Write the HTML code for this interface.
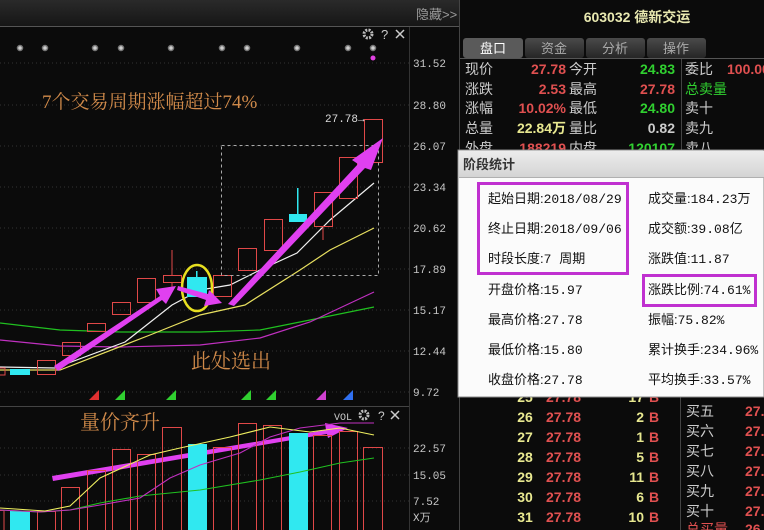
<!DOCTYPE html>
<html><head><meta charset="utf-8"><style>
html,body{margin:0;padding:0;background:#0a0a0a;width:764px;height:530px;overflow:hidden}
svg{display:block}
text{font-family:"Liberation Sans","Noto Sans CJK SC",sans-serif}
.m{font-family:"Liberation Mono","Noto Sans CJK SC",monospace}
.s{font-family:"Liberation Serif","Noto Serif CJK SC",serif}
</style></head><body>
<svg width="764" height="530" viewBox="0 0 764 530" xmlns="http://www.w3.org/2000/svg">
<defs>
<linearGradient id="tb" x1="0" y1="0" x2="0" y2="1"><stop offset="0" stop-color="#2a2a2a"/><stop offset="1" stop-color="#161616"/></linearGradient>
<linearGradient id="ph" x1="0" y1="0" x2="0" y2="1"><stop offset="0" stop-color="#ececec"/><stop offset="1" stop-color="#d4d4d4"/></linearGradient>
<linearGradient id="tab" x1="0" y1="0" x2="0" y2="1"><stop offset="0" stop-color="#4a4a4a"/><stop offset="1" stop-color="#262626"/></linearGradient>
</defs>
<rect width="764" height="530" fill="#0b0b0b"/>
<rect x="0" y="0" width="459" height="26" fill="url(#tb)"/>
<line x1="0" y1="26.5" x2="459" y2="26.5" stroke="#555"/>
<text x="416" y="19" font-size="13" fill="#9a9a9a">隐藏&gt;&gt;</text>
<line x1="409.5" y1="27" x2="409.5" y2="530" stroke="#333"/>
<line x1="459.5" y1="0" x2="459.5" y2="530" stroke="#444"/>
<g stroke="#333" stroke-dasharray="1,3">
<line x1="0" y1="63" x2="409" y2="63"/><line x1="0" y1="105" x2="409" y2="105"/><line x1="0" y1="146" x2="409" y2="146"/><line x1="0" y1="187" x2="409" y2="187"/><line x1="0" y1="228" x2="409" y2="228"/><line x1="0" y1="269" x2="409" y2="269"/><line x1="0" y1="310" x2="409" y2="310"/><line x1="0" y1="351" x2="409" y2="351"/><line x1="0" y1="392" x2="409" y2="392"/>
<line x1="0" y1="448" x2="409" y2="448"/><line x1="0" y1="475" x2="409" y2="475"/><line x1="0" y1="501" x2="409" y2="501"/>
</g>
<g font-size="11" fill="#c8c8c8">
<text x="413" y="67" class="m">31.52</text><text x="413" y="109" class="m">28.80</text><text x="413" y="150" class="m">26.07</text><text x="413" y="191" class="m">23.34</text><text x="413" y="232" class="m">20.62</text><text x="413" y="273" class="m">17.89</text><text x="413" y="314" class="m">15.17</text><text x="413" y="355" class="m">12.44</text><text x="413" y="396" class="m">9.72</text>
<text x="413" y="452" class="m">22.57</text><text x="413" y="479" class="m">15.05</text><text x="413" y="505" class="m">7.52</text><text x="413" y="521" class="m">X万</text>
</g>
<g fill="#cfcfcf" stroke="#777" stroke-width="1.5"><circle cx="20" cy="48" r="2.5"/><circle cx="45" cy="48" r="2.5"/><circle cx="95" cy="48" r="2.5"/><circle cx="121" cy="48" r="2.5"/><circle cx="171" cy="48" r="2.5"/><circle cx="222" cy="48" r="2.5"/><circle cx="247" cy="48" r="2.5"/><circle cx="297" cy="48" r="2.5"/><circle cx="348" cy="48" r="2.5"/><circle cx="373" cy="48" r="2.5"/></g>
<circle cx="373" cy="58" r="2.5" fill="#e040e0"/>
<circle cx="368" cy="34" r="4" fill="none" stroke="#bbb" stroke-width="3" stroke-dasharray="2,1.2"/>
<text x="381" y="39" font-size="13" fill="#ccc">?</text>
<path d="M396 30l8 8M404 30l-8 8" stroke="#ccc" stroke-width="1.5"/>
<g fill="none" stroke-width="1.2">
<polyline stroke="#20c020" points="0,323 60,330 120,332 200,332 260,330 310,320 374,307"/>
<polyline stroke="#c030c0" points="0,340 60,346 120,347 200,345 260,338 310,322 374,292"/>
<polyline stroke="#e8e060" points="0,370 60,370 150,335 200,315 245,305 300,270 330,250 374,228"/>
<polyline stroke="#f0f0f0" points="0,367 55,368 125,342 172,305 200,290 230,285 260,270 297,253 330,220 374,183"/>
</g>
<g fill="none" stroke="#e04848" stroke-width="1">
<rect x="-2" y="368" width="7" height="7"/>
<rect x="37.5" y="360.5" width="18" height="14"/>
<rect x="62.5" y="342.5" width="18" height="13"/>
<rect x="87.5" y="323.5" width="18" height="8"/>
<rect x="112.5" y="302.5" width="18" height="12"/>
<rect x="137.5" y="278.5" width="18" height="24"/>
<rect x="163.5" y="275.5" width="18" height="7"/><line x1="172" y1="250" x2="172" y2="275"/><line x1="172" y1="283" x2="172" y2="290"/>
<rect x="213.5" y="275.5" width="18" height="21"/>
<rect x="238.5" y="248.5" width="18" height="22"/>
<rect x="264.5" y="219.5" width="18" height="31"/>
<rect x="314.5" y="192.5" width="18" height="34"/><line x1="323" y1="226" x2="323" y2="240"/>
<rect x="339.5" y="157.5" width="18" height="41"/>
<rect x="364.5" y="119.5" width="18" height="43"/>
</g>
<g fill="#30e8f0"><rect x="10" y="369" width="20" height="6"/><rect x="187" y="277" width="20" height="20"/><rect x="196" y="271" width="1.5" height="8"/><rect x="289" y="214" width="18" height="8"/><rect x="297" y="188" width="1.5" height="28"/></g>
<rect x="221.5" y="145.5" width="157" height="130" fill="none" stroke="#aaa" stroke-dasharray="3,3"/>
<text x="325" y="122" class="m" font-size="11" fill="#ddd">27.78→</text>
<ellipse cx="197" cy="288" rx="15" ry="23" fill="none" stroke="#e8e020" stroke-width="2.5"/>
<g fill="#e040f0">
<polygon points="54,366 160,296 156,289 176,286 166,304 162,300 58,371"/>
<polygon points="178,286 208,294 209,290 222,303 204,306 206,300 177,290"/>
<polygon points="228,304 358,164 352,160 383,138 371,170 365,168 234,306"/>
<polygon points="52,476 326,430 325,423 348,428 328,438 327,434 53,481"/>
</g>
<text x="42" y="108" font-size="19" fill="#d08a4a" class="s">7个交易周期涨幅超过74%</text>
<text x="191" y="368" font-size="20" fill="#d08a4a" class="s">此处选出</text>
<g font-size="10"><text x="89" y="399" fill="#e03030">◢</text><text x="115" y="399" fill="#30d030">◢</text><text x="166" y="399" fill="#30d030">◢</text><text x="241" y="399" fill="#30d030">◢</text><text x="266" y="399" fill="#30d030">◢</text><text x="316" y="399" fill="#d040d0">◢</text><text x="343" y="399" fill="#3070f0">◢</text></g>
<line x1="0" y1="406.5" x2="409" y2="406.5" stroke="#444"/>
<g fill="none" stroke="#e04848">
<rect x="-2" y="510.5" width="6" height="25"/>
<rect x="37.5" y="511.5" width="18" height="25"/>
<rect x="61.5" y="487.5" width="18" height="50"/>
<rect x="87.5" y="470.5" width="18" height="70"/>
<rect x="112.5" y="449.5" width="18" height="90"/>
<rect x="137.5" y="454.5" width="18" height="90"/>
<rect x="162.5" y="427.5" width="19" height="110"/>
<rect x="213.5" y="447.5" width="18" height="90"/>
<rect x="238.5" y="423.5" width="18" height="110"/>
<rect x="263.5" y="425.5" width="18" height="110"/>
<rect x="313.5" y="435.5" width="18" height="100"/>
<rect x="339.5" y="431.5" width="18" height="100"/>
<rect x="363.5" y="447.5" width="19" height="90"/>
</g>
<g fill="#30e8f0"><rect x="10" y="511" width="20" height="19"/><rect x="188" y="444" width="19" height="86"/><rect x="289" y="433" width="19" height="97"/></g>
<g fill="none" stroke-width="1.1">
<polyline stroke="#20c020" points="0,510 40,512 70,510 100,503 140,496 200,490 260,480 300,472 340,463 374,458"/>
<polyline stroke="#c030c0" points="0,510 40,512 70,510 100,505 140,498 170,478 200,465 240,453 270,437 300,428 340,423 374,423"/>
<polyline stroke="#f0f060" points="0,508 45,511 70,506 100,478 150,455 180,448 230,437 270,427 310,432 340,428 374,435"/>
</g>
<text x="80" y="429" font-size="20" fill="#d08a4a" class="s">量价齐升</text>
<text x="334" y="420" class="m" font-size="10" fill="#ccc">VOL</text>
<circle cx="364" cy="415" r="4" fill="none" stroke="#bbb" stroke-width="3" stroke-dasharray="2,1.2"/>
<text x="378" y="420" font-size="12" fill="#ccc">?</text>
<path d="M391 411l8 8M399 411l-8 8" stroke="#ccc" stroke-width="1.5"/>

<rect x="460" y="0" width="304" height="530" fill="#0b0b0b"/>
<text x="637" y="22" text-anchor="middle" font-size="14" font-weight="bold" fill="#e8e8b0">603032 德新交运</text>
<rect x="463" y="38" width="60" height="20" rx="3" fill="#5a5a5a"/>
<rect x="525" y="38" width="59" height="20" rx="3" fill="url(#tab)"/>
<rect x="586" y="38" width="59" height="20" rx="3" fill="url(#tab)"/>
<rect x="647" y="38" width="59" height="20" rx="3" fill="url(#tab)"/>
<line x1="460" y1="58.5" x2="764" y2="58.5" stroke="#555"/>
<g font-size="13" text-anchor="middle"><text x="493" y="53" fill="#fff">盘口</text><text x="554" y="53" fill="#aaa">资金</text><text x="615" y="53" fill="#aaa">分析</text><text x="676" y="53" fill="#aaa">操作</text></g>
<line x1="681.5" y1="59" x2="681.5" y2="150" stroke="#444"/>
<g font-size="14">
<g fill="#ccc"><text x="465" y="74">现价</text><text x="465" y="94">涨跌</text><text x="465" y="113">涨幅</text><text x="465" y="133">总量</text><text x="465" y="153">外盘</text>
<text x="569" y="74">今开</text><text x="569" y="94">最高</text><text x="569" y="113">最低</text><text x="569" y="133">量比</text><text x="569" y="153">内盘</text>
<text x="685" y="74">委比</text><text x="685" y="113">卖十</text><text x="685" y="133">卖九</text><text x="685" y="153">卖八</text></g>
<text x="685" y="94" fill="#30d030">总卖量</text>
<g text-anchor="end" font-weight="bold">
<text x="566" y="74" fill="#e05050">27.78</text><text x="566" y="94" fill="#e05050">2.53</text><text x="566" y="113" fill="#e05050">10.02%</text><text x="566" y="133" fill="#e8e890">22.84万</text><text x="566" y="153" fill="#e05050">188219</text>
<text x="675" y="74" fill="#30d030">24.83</text><text x="675" y="94" fill="#e05050">27.78</text><text x="675" y="113" fill="#30d030">24.80</text><text x="675" y="133" fill="#ccc">0.82</text><text x="675" y="153" fill="#30d030">120107</text>
</g>
<text x="727" y="74" font-weight="bold" fill="#e05050">100.00</text>
</g>
<line x1="680.5" y1="397" x2="680.5" y2="530" stroke="#444"/>
<g font-size="14" font-weight="bold">
<g fill="#e8e890" text-anchor="middle"><text x="525" y="402">25</text><text x="525" y="422">26</text><text x="525" y="442">27</text><text x="525" y="462">28</text><text x="525" y="482">29</text><text x="525" y="502">30</text><text x="525" y="522">31</text></g>
<g fill="#e05050"><text x="546" y="402">27.78</text><text x="546" y="422">27.78</text><text x="546" y="442">27.78</text><text x="546" y="462">27.78</text><text x="546" y="482">27.78</text><text x="546" y="502">27.78</text><text x="546" y="522">27.78</text></g>
<g fill="#e8e890" text-anchor="end"><text x="644" y="402">17</text><text x="644" y="422">2</text><text x="644" y="442">1</text><text x="644" y="462">5</text><text x="644" y="482">11</text><text x="644" y="502">6</text><text x="644" y="522">10</text></g>
<g fill="#e05050"><text x="649" y="402">B</text><text x="649" y="422">B</text><text x="649" y="442">B</text><text x="649" y="462">B</text><text x="649" y="482">B</text><text x="649" y="502">B</text><text x="649" y="522">B</text></g>
</g>
<g font-size="14" fill="#ccc"><text x="686" y="416">买五</text><text x="686" y="436">买六</text><text x="686" y="456">买七</text><text x="686" y="476">买八</text><text x="686" y="496">买九</text><text x="686" y="516">买十</text></g>
<text x="686" y="534" font-size="14" fill="#e05050">总买量</text>
<g font-size="14" font-weight="bold" fill="#e05050"><text x="745" y="416">27.</text><text x="745" y="436">27.</text><text x="745" y="456">27.</text><text x="745" y="476">27.</text><text x="745" y="496">27.</text><text x="745" y="516">27.</text><text x="745" y="534">26</text></g>

<rect x="458" y="150" width="306" height="247" fill="#fbfbfb" stroke="#888"/>
<rect x="459" y="151" width="305" height="26" fill="url(#ph)"/>
<line x1="459" y1="177.5" x2="764" y2="177.5" stroke="#b0b0b0"/>
<text x="463" y="169" font-size="13" font-weight="bold" fill="#333">阶段统计</text>
<g font-size="13" fill="#111">
<text x="488" y="203">起始日期:<tspan class="m">2018/08/29</tspan></text>
<text x="488" y="233">终止日期:<tspan class="m">2018/09/06</tspan></text>
<text x="488" y="263">时段长度:<tspan class="m">7 </tspan>周期</text>
<text x="488" y="294">开盘价格:<tspan class="m">15.97</tspan></text>
<text x="488" y="324">最高价格:<tspan class="m">27.78</tspan></text>
<text x="488" y="354">最低价格:<tspan class="m">15.80</tspan></text>
<text x="488" y="384">收盘价格:<tspan class="m">27.78</tspan></text>
<text x="648" y="203">成交量:<tspan class="m">184.23</tspan>万</text>
<text x="648" y="233">成交额:<tspan class="m">39.08</tspan>亿</text>
<text x="648" y="263">涨跌值:<tspan class="m">11.87</tspan></text>
<text x="648" y="294">涨跌比例:<tspan class="m">74.61%</tspan></text>
<text x="648" y="324">振幅:<tspan class="m">75.82%</tspan></text>
<text x="648" y="354">累计换手:<tspan class="m">234.96%</tspan></text>
<text x="648" y="384">平均换手:<tspan class="m">33.57%</tspan></text>
</g>
<rect x="478.5" y="183.5" width="149" height="90" fill="none" stroke="#c030d0" stroke-width="3"/>
<rect x="643.5" y="275.5" width="112" height="30" fill="none" stroke="#c030d0" stroke-width="3"/>
</svg>
</body></html>
